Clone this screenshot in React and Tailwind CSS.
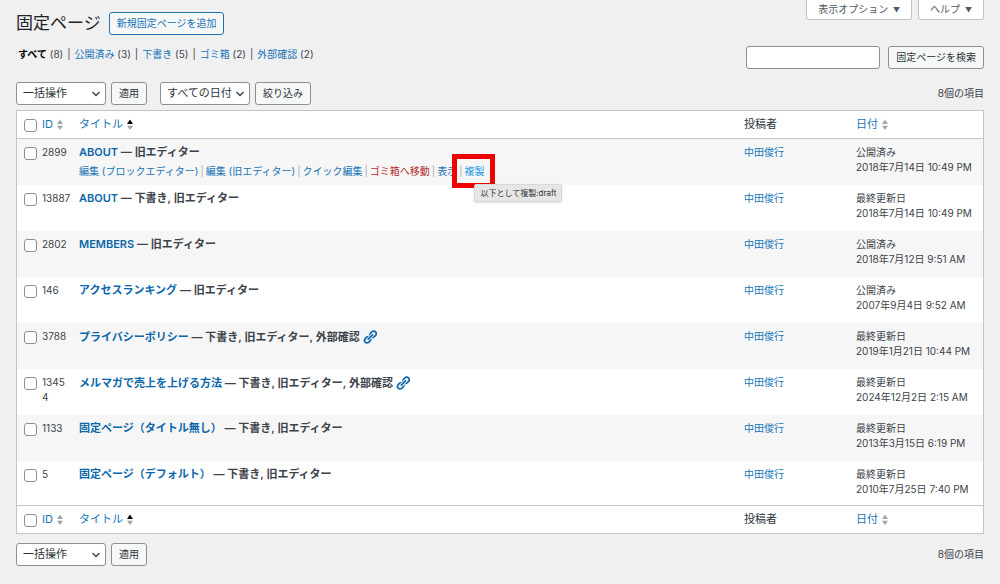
import { useState } from 'react';

const FILTERS = [
  { label: 'すべて', count: 8 },
  { label: '公開済み', count: 3 },
  { label: '下書き', count: 5 },
  { label: 'ゴミ箱', count: 2 },
  { label: '外部確認', count: 2 },
];

const PAGES = [
  { id: 2899, title: 'ABOUT', states: '旧エディター', status: '公開済み', date: '2018年7月14日 10:49 PM', active: true },
  { id: 13887, title: 'ABOUT', states: '下書き, 旧エディター', status: '最終更新日', date: '2018年7月14日 10:49 PM' },
  { id: 2802, title: 'MEMBERS', states: '旧エディター', status: '公開済み', date: '2018年7月12日 9:51 AM' },
  { id: 146, title: 'アクセスランキング', states: '旧エディター', status: '公開済み', date: '2007年9月4日 9:52 AM' },
  { id: 3788, title: 'プライバシーポリシー', states: '下書き, 旧エディター, 外部確認', external: true, status: '最終更新日', date: '2019年1月21日 10:44 PM' },
  { id: 13454, title: 'メルマガで売上を上げる方法', states: '下書き, 旧エディター, 外部確認', external: true, status: '最終更新日', date: '2024年12月2日 2:15 AM' },
  { id: 1133, title: '固定ページ（タイトル無し）', states: '下書き, 旧エディター', status: '最終更新日', date: '2013年3月15日 6:19 PM' },
  { id: 5, title: '固定ページ（デフォルト）', states: '下書き, 旧エディター', status: '最終更新日', date: '2010年7月25日 7:40 PM' },
];

const ACTIONS = ['編集 (ブロックエディター)', '編集 (旧エディター)', 'クイック編集', 'ゴミ箱へ移動', '表示'];

function SortIcon({ sorted }) {
  return (
    <svg viewBox="0 0 8 12" className="w-2 h-3 shrink-0" aria-hidden="true">
      <path d="M4 0.5 L7 5 H1 Z" fill={sorted ? '#000000' : '#a0a5aa'} />
      <path d="M4 11 L7 6.8 H1 Z" fill="#a0a5aa" />
    </svg>
  );
}

function LinkIcon() {
  return (
    <svg viewBox="0 0 20 20" className="inline-block size-4 align-[-4px] ml-0.5 text-[#0a67ab]" fill="currentColor" aria-hidden="true">
      <path d="M17.74 2.76c1.68 1.69 1.68 4.41 0 6.1l-1.53 1.52c-1.12 1.12-2.7 1.47-4.14 1.09l2.62-2.61.76-.77.76-.76c.84-.84.84-2.2 0-3.04-.84-.85-2.2-.85-3.04 0l-.77.76-3.38 3.38c-.37-1.44-.02-3.02 1.1-4.14l1.52-1.53c1.69-1.68 4.42-1.68 6.1 0zM8.59 13.43l5.34-5.34c.42-.42.42-1.1 0-1.52-.44-.43-1.13-.39-1.53 0l-5.33 5.34c-.42.42-.42 1.1 0 1.52.44.43 1.13.39 1.52 0zm-.76 2.29l4.14-4.15c.38 1.44.03 3.02-1.09 4.14l-1.52 1.53c-1.69 1.68-4.41 1.68-6.1 0-1.68-1.68-1.68-4.42 0-6.1l1.53-1.52c1.12-1.12 2.7-1.47 4.14-1.1l-4.14 4.15c-.85.84-.85 2.2 0 3.05.84.84 2.2.84 3.04 0z" />
    </svg>
  );
}

function Button({ children, ...props }) {
  return (
    <button
      className="h-[23px] px-[7px] rounded-[3px] border border-[#8c8f94] bg-[#f6f7f7] text-[#2c3338] whitespace-nowrap"
      {...props}
    >
      {children}
    </button>
  );
}

function Select({ label, option }) {
  return (
    <div className="relative w-[90px]">
      <select
        aria-label={label}
        className="block w-full h-[23px] pl-1.5 pr-4 appearance-none rounded-[3px] border border-[#8c8f94] bg-white text-[11px] leading-[15px] text-[#2c3338]"
      >
        <option>{option}</option>
      </select>
      <svg viewBox="0 0 8 8" className="absolute right-[6px] top-2 size-2 pointer-events-none" fill="none" stroke="#3c434a" strokeWidth="1.4" aria-hidden="true">
        <path d="M0.5 2 L4 5.6 L7.5 2" />
      </svg>
    </div>
  );
}

function Checkbox({ label, ...props }) {
  return (
    <input
      type="checkbox"
      aria-label={label}
      className="block size-[13px] appearance-none rounded-[3px] border border-[#8c8f94] bg-white checked:bg-[#2271b1]"
      {...props}
    />
  );
}

function HeadingRow({ allChecked, onToggle, edge }) {
  return (
    <tr className={`*:h-7 *:p-0 *:text-left *:font-normal *:border-[#c3c4c7] ${edge}`}>
      <td className="w-[25px]">
        <div className="pl-[7px] pt-0.5">
          <Checkbox label="すべて選択" checked={allChecked} onChange={onToggle} />
        </div>
      </td>
      <th className="w-[37px]">
        <a href="#id" className="flex items-center gap-[3px] text-[11px] text-[#1474b8]">ID <SortIcon /></a>
      </th>
      <th>
        <a href="#title" className="flex items-center gap-[3px] text-[11px] text-[#1474b8]">タイトル <SortIcon sorted /></a>
      </th>
      <th className="w-28 text-[11px] text-[#2c3338]">投稿者</th>
      <th className="w-[127px]">
        <a href="#date" className="flex items-center gap-[3px] text-[11px] text-[#1474b8]">日付 <SortIcon /></a>
      </th>
    </tr>
  );
}

function RowActions() {
  return (
    <div className="flex mt-1 whitespace-nowrap text-[#1474b8]">
      {ACTIONS.map((action) => (
        <span key={action}>
          <a href="#action" className={action === 'ゴミ箱へ移動' ? 'text-[#b32d2e]' : ''}>{action}</a>
          <span className="px-0.5 text-[#a7aaad]">|</span>
        </span>
      ))}
      <span className="relative">
        <a href="#duplicate" className="text-[#2196e8]">複製</a>
        <span className="absolute -left-3 -top-2.5 w-[43px] h-[34px] border-[5px] border-[#ee0000] pointer-events-none" />
        <span role="tooltip" className="absolute left-2.5 top-5 px-[5px] rounded-[2px] border border-[#d8d8d8] bg-[#e6e6e6] text-[8px] leading-[16px] text-[#2c3338] shadow">
          以下として複製:draft
        </span>
      </span>
    </div>
  );
}

function TableNav({ children, className }) {
  return (
    <div className={`flex items-center gap-[5px] ${className}`}>
      <Select label="一括操作を選択" option="一括操作" />
      <Button type="button">適用</Button>
      {children}
      <span className="ml-auto">8個の項目</span>
    </div>
  );
}

function App() {
  const [selected, setSelected] = useState([]);
  const allChecked = selected.length === PAGES.length;

  const toggle = (id) => {
    setSelected(selected.includes(id) ? selected.filter((s) => s !== id) : [...selected, id]);
  };

  const toggleAll = () => {
    setSelected(allChecked ? [] : PAGES.map((page) => page.id));
  };

  return (
    <div className="min-h-screen px-4 pb-4 bg-[#f0f0f1] font-['Inter','Noto_Sans_CJK_JP',sans-serif] text-[10px] leading-[15px] text-[#3c434a]">
      <div className="flex justify-between">
        <div className="pt-3">
          <div className="flex items-center gap-2">
            <h1 className="text-[17px] leading-[23px] text-[#1d2327]">固定ページ</h1>
            <a href="#new" className="px-[7px] py-[3px] rounded-[3px] border border-[#2271b1] bg-[#f6f7f7] text-[#1474b8]">新規固定ページを追加</a>
          </div>
          <ul className="flex mt-3 pl-0.5">
            {FILTERS.map(({ label, count }, i) => (
              <li key={label}>
                {i > 0 && <span className="px-1">|</span>}
                <a href="#filter" className={i === 0 ? 'font-bold text-black' : 'text-[#1474b8]'}>{label}</a> ({count})
              </li>
            ))}
          </ul>
        </div>

        <div className="flex flex-col items-end">
          <div className="flex gap-1.5 *:h-5 *:px-[11px] *:rounded-b-[3px] *:border *:border-t-0 *:border-[#c3c4c7] *:bg-white *:text-[#50575e]">
            <button type="button">表示オプション <span className="ml-0.5 text-[7px]">▼</span></button>
            <button type="button">ヘルプ <span className="ml-0.5 text-[7px]">▼</span></button>
          </div>
          <form className="flex gap-2 mt-[26px]" onSubmit={(e) => e.preventDefault()}>
            <input type="search" aria-label="固定ページを検索" className="w-[134px] h-[23px] px-1.5 rounded-[3px] border border-[#8c8f94] bg-white" />
            <Button type="submit">固定ページを検索</Button>
          </form>
        </div>
      </div>

      <TableNav className="mt-[13px]">
        <div className="flex gap-[5px] ml-2">
          <Select label="日付で絞り込む" option="すべての日付" />
          <Button type="button">絞り込み</Button>
        </div>
      </TableNav>

      <div className="mt-[5px] border border-[#c3c4c7] bg-white">
        <table className="w-full table-fixed border-separate border-spacing-0">
          <thead>
            <HeadingRow allChecked={allChecked} onToggle={toggleAll} edge="*:border-b" />
          </thead>
          <tbody className="*:last:*:h-11">
            {PAGES.map((page) => (
              <tr key={page.id} className="odd:bg-[#f6f6f6] *:h-[46px] *:p-0 *:pt-1.5 *:align-top">
                <td>
                  <div className="pl-[7px] pt-0.5">
                    <Checkbox label={`${page.title}を選択`} checked={selected.includes(page.id)} onChange={() => toggle(page.id)} />
                  </div>
                </td>
                <td>
                  <div className="w-[29px] break-all">{page.id}</div>
                </td>
                <td>
                  <div className="text-[11px] font-semibold whitespace-nowrap">
                    <a href="#edit" className="text-[#0a67ab]">{page.title}</a> — {page.states}
                    {page.external && <LinkIcon />}
                  </div>
                  {page.active && <RowActions />}
                </td>
                <td>
                  <a href="#author" className="text-[#1474b8]">中田俊行</a>
                </td>
                <td>
                  {page.status}
                  <br />
                  {page.date}
                </td>
              </tr>
            ))}
          </tbody>
          <tfoot>
            <HeadingRow allChecked={allChecked} onToggle={toggleAll} edge="*:border-t" />
          </tfoot>
        </table>
      </div>

      <TableNav className="mt-[9px]" />
    </div>
  );
}

export default App;
